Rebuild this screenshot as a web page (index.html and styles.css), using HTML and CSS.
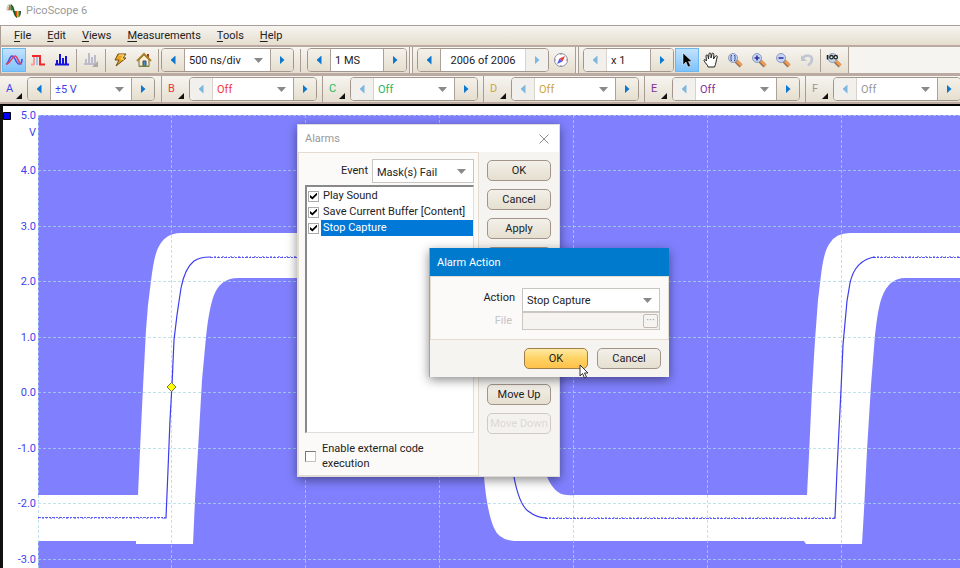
FILE: index.html
```html
<!DOCTYPE html>
<html lang="en">
<head>
<meta charset="utf-8">
<title>PicoScope 6</title>
<link rel="stylesheet" href="styles.css">
</head>
<body>
<div class="app">
  <header class="titlebar">
    <svg class="logo" viewBox="0 0 16 16" width="16" height="16" aria-hidden="true">
      <defs><linearGradient id="spectrum"><stop offset="0" stop-color="#0c6a2c"/><stop offset=".25" stop-color="#178a2c"/><stop offset=".4" stop-color="#e0321c"/><stop offset=".6" stop-color="#f0c41c"/><stop offset=".8" stop-color="#208a2c"/><stop offset="1" stop-color="#2b2f6a"/></linearGradient></defs>
      <path d="M1 7C1 3 2 1.500 4.500 1.500S8 4 8 8H6L5 7H1Z" fill="#e3f0dc" stroke="#8cb08c" stroke-width=".7"/>
      <path d="M2.500 7C2.500 3 3 2 4.500 2v5Z" fill="#ee4a2a"/>
      <path d="M4.500 2c2 0 3 2 3.500 6L6 7H4.500Z" fill="#2b8a3a"/>
      <path d="M7 8h8c0 4-1 6.500-3.500 6.500S8 12 7 8Z" fill="url(#spectrum)"/>
      <path d="M5 2C8 3 8 13 11 14.500" fill="none" stroke="#14421d"/>
    </svg>
    <span>PicoScope 6</span>
  </header>

  <nav class="menubar" aria-label="Main menu">
    <a href="#"><u>F</u>ile</a><a href="#"><u>E</u>dit</a><a href="#"><u>V</u>iews</a><a href="#"><u>M</u>easurements</a><a href="#"><u>T</u>ools</a><a href="#"><u>H</u>elp</a>
  </nav>

  <div class="toolbar" role="toolbar" aria-label="Capture">
    <div class="strip">
      <button class="tool active" aria-label="Scope mode"><svg viewBox="0 0 18 16" width="18" height="16"><path d="M1 12C4 12 4 4 7 4s4 8 7 8 3-4 3-5" fill="none" stroke="#4c50e8" stroke-width="1.600"/><path d="M1 12c4 1 6-8 9-8s3 8 7 8" fill="none" stroke="#e3465f" stroke-width="1.600"/></svg></button>
      <button class="tool" aria-label="Persistence mode"><svg viewBox="0 0 16 16" width="16" height="16"><path d="M1 12.500h3M4 4v9" fill="none" stroke="#ff9a9a" stroke-width="2"/><path d="M7 4v9" stroke="#9cc8ee" stroke-width="2"/><path d="M2 4h8v8.500h5" fill="none" stroke="#f0282d" stroke-width="2"/></svg></button>
      <button class="tool" aria-label="Spectrum mode"><svg viewBox="0 0 16 16" width="16" height="16"><path d="M1 12.500h14M3 13V8M6 13V2M9 13V6M12 13V4" fill="none" stroke="#1414dd" stroke-width="2"/></svg></button>
      <i class="sep"></i>
      <button class="tool" aria-label="Spectrum options" disabled><svg viewBox="0 0 16 16" width="16" height="16"><path d="M1 12h13M3 12V7M6 12V1M9 12V5M12 12V3" fill="none" stroke="#bcbcca" stroke-width="2"/><path d="M15 9v6H9Z" fill="#aaa"/></svg></button>
      <i class="sep"></i>
      <button class="tool" aria-label="Automatic setup"><svg viewBox="0 0 16 16" width="16" height="16"><path d="M6 2h8l-3 4h3L4 14l3-6H3Z" fill="#eaa51e" stroke="#6b4c18"/><path d="M7 3h5L9 7h3" fill="none" stroke="#ffe48a"/></svg></button>
      <button class="tool" aria-label="Home"><svg viewBox="0 0 16 16" width="16" height="16"><path d="M11 2h2v4h-2Z" fill="#9b3c22"/><path d="M3 8v6.500h10V8L8 3Z" fill="#f7edcf" stroke="#75664a"/><path d="M1 9l7-7 7 7" fill="none" stroke="#a8842c" stroke-width="2"/><path d="M7 9h3v5H7Z" fill="#4a8bd0" stroke="#3e4b58"/><path d="M3 14h10" stroke="#7c9c35"/></svg></button>
      <i class="sep"></i>
      <div class="spinner">
        <button class="step prev" aria-label="Shorter timebase"></button>
        <label class="combo timebase"><select aria-label="Timebase"><option>500 ns/div</option></select></label>
        <button class="step next" aria-label="Longer timebase"></button>
      </div>
      <i class="sep wide"></i>
      <div class="spinner">
        <button class="step prev" aria-label="Fewer samples"></button>
        <input class="samples" type="text" value="1 MS" aria-label="Samples">
        <button class="step next" aria-label="More samples"></button>
      </div>
    </div>
    <div class="strip">
      <div class="spinner">
        <button class="step prev" aria-label="Previous buffer"></button>
        <input class="buffer" type="text" value="2006 of 2006" aria-label="Buffer">
        <button class="step next" aria-label="Next buffer" disabled></button>
      </div>
      <button class="tool" aria-label="Buffer navigator"><svg viewBox="0 0 16 16" width="16" height="16"><circle cx="8" cy="8" r="6.500" fill="#fff" stroke="#8d8da0"/><path d="M8 2v1M8 13v1M2 8h1M13 8h1" stroke="#888"/><path d="M12 4L9.500 9.500l-3-3Z" fill="#f03a3a"/><path d="M4 12l2.500-5.500 3 3Z" fill="#4e5df0"/></svg></button>
    </div>
    <div class="strip">
      <div class="spinner">
        <button class="step prev" aria-label="Zoom factor down" disabled></button>
        <input class="factor" type="text" value="x 1" aria-label="Zoom factor">
        <button class="step next" aria-label="Zoom factor up"></button>
      </div>
      <button class="tool active pointer" aria-label="Select"><svg viewBox="0 0 16 16" width="16" height="16"><path d="M4 1v12l3-3 2 5 2.500-1L9.500 9.500H13Z" fill="#000" stroke="#fff" stroke-width=".5"/></svg></button>
      <button class="tool" aria-label="Hand"><svg viewBox="0 0 16 16" width="16" height="16"><path d="M5 15c0-2-3-4-4-6.500 0-1.500 1.500-1 2.500.5L3 4c0-1.500 1.500-1.500 2 0l.5 3L6 2c0-1.500 1.800-1.500 2 0v4l1-4c.3-1.500 2-1 1.800.5L10.500 7 12.500 4c.8-1 2 0 1.700 1C13 9 13 12 11.500 15Z" fill="#fff" stroke="#222"/></svg></button>
      <button class="tool" aria-label="Zoom window"><svg viewBox="0 0 16 16" width="16" height="16"><path d="M9 9l5 5" stroke="#8b735d" stroke-width="4"/><path d="M10 9l4.500 4.500" stroke="#f2994e" stroke-width="2.600"/><circle cx="6" cy="6" r="4.500" fill="#c5d5f6" stroke="#8f9bb6"/><path d="M5 3.500H4v5h1M7 3.500h1v5H7" fill="none" stroke="#4450a0"/></svg></button>
      <button class="tool" aria-label="Zoom in"><svg viewBox="0 0 16 16" width="16" height="16"><path d="M9 9l5 5" stroke="#8b735d" stroke-width="4"/><path d="M10 9l4.500 4.500" stroke="#f2994e" stroke-width="2.600"/><circle cx="6" cy="6" r="4.500" fill="#c5d5f6" stroke="#8f9bb6"/><path d="M3.500 6h5M6 3.500v5" stroke="#30309c" stroke-width="1.600"/></svg></button>
      <button class="tool" aria-label="Zoom out"><svg viewBox="0 0 16 16" width="16" height="16"><path d="M9 9l5 5" stroke="#8b735d" stroke-width="4"/><path d="M10 9l4.500 4.500" stroke="#f2994e" stroke-width="2.600"/><circle cx="6" cy="6" r="4.500" fill="#c5d5f6" stroke="#8f9bb6"/><path d="M3.500 6h5" stroke="#30309c" stroke-width="1.600"/></svg></button>
      <button class="tool" aria-label="Undo zoom" disabled><svg viewBox="0 0 16 16" width="16" height="16"><path d="M3 6.500C7 2 13 3 13 7.500c0 3-2 4.500-4 6" fill="none" stroke="#bfc5d2" stroke-width="2.500"/><path d="M2 3v6h6Z" fill="#bfc5d2"/></svg></button>
      <i class="sep tight"></i>
      <button class="tool" aria-label="Zoom to 100%"><svg viewBox="0 0 16 16" width="16" height="16"><path d="M9 9l5 5" stroke="#8b735d" stroke-width="4"/><path d="M10 9l4.500 4.500" stroke="#f2994e" stroke-width="2.600"/><circle cx="6.500" cy="6" r="4.500" fill="#c5d5e6" stroke="#8f9bb6"/><path d="M1.500 3v4.500" stroke="#222" stroke-width="1.500"/><circle cx="5.500" cy="5.200" r="1.700" fill="#dff" stroke="#222" stroke-width="1.300"/><circle cx="9.700" cy="5.200" r="1.700" fill="#dff" stroke="#222" stroke-width="1.300"/></svg></button>
    </div>
  </div>

  <div class="toolbar channels" role="toolbar" aria-label="Channels">
    <div class="channel a"><button class="name">A</button><div class="spinner"><button class="step prev" aria-label="Range down"></button><label class="combo"><select aria-label="Channel A range"><option>±5 V</option></select></label><button class="step next" aria-label="Range up"></button></div></div>
    <div class="channel b"><button class="name">B</button><div class="spinner"><button class="step prev" aria-label="Range down" disabled></button><label class="combo"><select aria-label="Channel B range"><option>Off</option></select></label><button class="step next" aria-label="Range up"></button></div></div>
    <div class="channel c"><button class="name">C</button><div class="spinner"><button class="step prev" aria-label="Range down" disabled></button><label class="combo"><select aria-label="Channel C range"><option>Off</option></select></label><button class="step next" aria-label="Range up"></button></div></div>
    <div class="channel d"><button class="name">D</button><div class="spinner"><button class="step prev" aria-label="Range down" disabled></button><label class="combo"><select aria-label="Channel D range"><option>Off</option></select></label><button class="step next" aria-label="Range up"></button></div></div>
    <div class="channel e"><button class="name">E</button><div class="spinner"><button class="step prev" aria-label="Range down" disabled></button><label class="combo"><select aria-label="Channel E range"><option>Off</option></select></label><button class="step next" aria-label="Range up"></button></div></div>
    <div class="channel f"><button class="name">F</button><div class="spinner"><button class="step prev" aria-label="Range down" disabled></button><label class="combo"><select aria-label="Channel F range"><option>Off</option></select></label><button class="step next" aria-label="Range up"></button></div></div>
  </div>

  <main class="scope">
    <svg class="plot" viewBox="3 106 957 462" preserveAspectRatio="xMinYMin slice" role="img" aria-label="Channel A waveform with mask">
      <path d="M38 115H960V568H38Z" fill="#8080ff"/>
      <path class="pass" d="M38 495H138L140 450 143 387 146 330 148 305 151 281Q154 256 158 248 165 233 181 233H440C470 233 474 300 486 350 Q515 455 547 477 552 488 558 492 563 496 575 495H807L809 455 812 390 815 340 818 300 821 275Q824 250 830 243 836 233 850 233H960V278H905Q889 278 882 297 878 307 875 335L871 385 867 450 864 510 862 544H806L804 541H514Q499 540 494 528 487 512 484 477C450 400 450 278 420 278H240Q221 277 214 295 209 308 206 337L202 380 198 450 195 500 193 544H136V541H38Z"/>
      <g class="grid">
        <path d="M38.500 115V568M171.500 115V568M305.500 115V568M439.500 115V568M573.500 115V568M707.500 115V568M841.500 115V568"/>
        <path d="M38 115.500H960M38 170.500H960M38 226.500H960M38 281.500H960M38 337.500H960M38 392.500H960M38 448.500H960M38 503.500H960M38 559.500H960"/>
      </g>
      <path class="trace" d="M164 518H166L168 470 170 420 172 385 174 340 177 315 181 288Q185 268 194 261 200 257 210 257M514 477Q519 504 528 511 537 518 547 518M834 518H835L837 470 841 390 843 345 847 301 850 283Q855 260 875 257"/>
      <g class="noise">
        <path d="M38 517.500H165M210 257.500H450M545 518.500H835M873 257.500H960"/>
        <path class="ripple" d="M38 518.500H165M210 256.500H450M545 517.500H835M873 256.500H960"/>
      </g>
      <path d="M171.500 382.500L176 387 171.500 391.500 167 387Z" fill="#ff0" stroke="#77763c"/>
      <path d="M3.500 112.500H10.500V119.500H3.500Z" fill="#00f" stroke="#000"/>
      <g class="axis">
        <text x="36" y="119">5.0</text><text x="36" y="136">V</text><text x="36" y="174">4.0</text><text x="36" y="230">3.0</text><text x="36" y="285">2.0</text><text x="36" y="341">1.0</text><text x="36" y="396">0.0</text><text x="36" y="452">-1.0</text><text x="36" y="507">-2.0</text><text x="36" y="563">-3.0</text>
      </g>
    </svg>
  </main>

  <section class="dialog alarms" role="dialog" aria-labelledby="alarms-title">
    <header class="dialog-title"><span id="alarms-title">Alarms</span><button class="close" aria-label="Close"><svg viewBox="0 0 10 10" width="10" height="10"><path d="M.5.5l9 9M9.500.5l-9 9" stroke="#8c8c8c"/></svg></button></header>
    <div class="alarms-body">
      <div class="alarms-main">
        <div class="field"><label for="event">Event</label><span class="combo boxed"><select id="event"><option>Mask(s) Fail</option></select></span></div>
        <ul class="actions">
          <li><label><input type="checkbox" checked><span>Play Sound</span></label></li>
          <li><label><input type="checkbox" checked><span>Save Current Buffer [Content]</span></label></li>
          <li class="selected"><label><input type="checkbox" checked><span>Stop Capture</span></label></li>
        </ul>
        <label class="external"><input type="checkbox"><span>Enable external code execution</span></label>
      </div>
      <div class="alarms-side">
        <button class="push">OK</button>
        <button class="push">Cancel</button>
        <button class="push">Apply</button>
        <button class="push">Add</button>
        <button class="push move">Move Up</button>
        <button class="push" disabled>Move Down</button>
      </div>
    </div>
  </section>

  <section class="dialog action" role="dialog" aria-labelledby="action-title">
    <header class="dialog-title"><span id="action-title">Alarm Action</span></header>
    <div class="action-main">
      <label for="act">Action</label><span class="combo boxed"><select id="act"><option>Stop Capture</option></select></span>
      <label class="off" for="file">File</label><span class="file"><input id="file" type="text" disabled><button class="browse" aria-label="Browse" disabled>···</button></span>
    </div>
    <footer class="action-footer"><button class="push primary">OK</button><button class="push">Cancel</button></footer>
    <svg class="cursor" viewBox="0 0 10 15" width="10" height="15" aria-hidden="true"><path d="M1 1v11l2.500-2.500L5.500 14l2-1-2-4H9Z" fill="#fff" stroke="#333"/></svg>
  </section>
</div>
</body>
</html>
```

FILE: styles.css
```css
* { box-sizing: border-box; }

body {
  margin: 0;
  background: #fff;
  color: #222;
  font: 11px/16px Roboto, "Noto Sans", sans-serif;
  overflow: hidden;
}

button, input, select {
  margin: 0;
  padding: 0;
  border: 0;
  border-radius: 0;
  background: none;
  color: inherit;
  font: inherit;
}

.app {
  position: relative;
  display: flex;
  flex-direction: column;
  height: 100vh;
}

.titlebar {
  display: flex;
  align-items: center;
  gap: 4px;
  height: 25px;
  padding: 0 0 4px 6px;
  color: #999;
}

/* Menu and toolbars */
.menubar {
  display: flex;
  gap: 16px;
  height: 20px;
  padding: 2px 13px;
  border-top: 1px solid #a99d95;
  border-left: 1px solid #a99d95;
  background: linear-gradient(#f7f5f1, #e5dece);
}

.menubar a { color: #222; text-decoration: none; }
.menubar u { text-underline-offset: 2px; }

.toolbar {
  display: flex;
  gap: 2px;
  flex: none;
  height: 30px;
  border-top: 2px solid #bbaaa1;
  border-bottom: 2px solid #bbaaa1;
  background: #f6f4f1;
  overflow: hidden;
}

.strip {
  display: flex;
  flex: none;
  align-items: center;
  padding: 0 2px 0 4px;
  border: solid #ab9d94;
  border-width: 0 1px;
  background: linear-gradient(#f7f5f1, #e6dfd0);
}

.strip:first-child { padding-left: 1px; }

.tool {
  display: grid;
  place-items: center;
  width: 24px;
  height: 24px;
}

.tool.active {
  border: 1px solid #6cb9f2;
  background: linear-gradient(#c3e2fd, #7fc2fb);
}

.pointer { margin-left: 1px; }

.sep {
  width: 1px;
  height: 23px;
  margin: 0 2px;
  background: #a99c93;
}

.sep.wide { margin: 0 6px; }
.sep.tight { margin: 0 1px; }

.spinner {
  display: flex;
  flex: none;
  height: 24px;
  border: 1px solid #a3968d;
  border-radius: 4px;
  overflow: hidden;
  background: #fff;
}

.step {
  display: grid;
  place-items: center;
  width: 23px;
  background: linear-gradient(#f4f1ea, #e6dfcf);
}

.prev { border-right: 1px solid #aea198; }
.next { border-left: 1px solid #aea198; }

.step::before {
  content: "";
  width: 5px;
  height: 9px;
  background: #0a78d0;
}

.prev::before { clip-path: polygon(100% 0, 100% 100%, 0 50%); }
.next::before { clip-path: polygon(0 0, 100% 50%, 0 100%); }
.step:disabled { background: #f2f0ec; border-color: #d8d2cb; }
.step:disabled::before { background: #7bb7e0; }

.combo {
  position: relative;
  display: flex;
}

.combo select {
  appearance: none;
  width: 100%;
  padding: 1px 20px 0 4px;
  background: #fff;
}

.combo::after {
  content: "";
  position: absolute;
  top: 50%;
  right: 7px;
  width: 9px;
  height: 5px;
  margin-top: -2px;
  background: #898989;
  clip-path: polygon(0 0, 100% 0, 50% 100%);
  pointer-events: none;
}

.spinner input { padding-top: 1px; background: #fff; }
.timebase { width: 85px; }
.spinner .samples { width: 52px; padding-left: 4px; }
.spinner .buffer { width: 84px; text-align: center; }
.spinner .factor { width: 43px; padding-left: 4px; }

.channels {
  gap: 0;
  height: 29px;
  border-top-width: 1px;
  background: linear-gradient(#f7f5f1, #e6dfd0);
}

.channel {
  display: flex;
  flex: none;
  align-items: center;
  width: 161px;
  padding-left: 3px;
}

.channel + .channel { border-left: 1px solid #a99c93; }
.channel .combo { width: 80px; }

.name {
  position: relative;
  width: 24px;
  height: 24px;
  padding-left: 3px;
  text-align: left;
}

.name::after {
  content: "";
  position: absolute;
  right: 5px;
  bottom: 2px;
  width: 6px;
  height: 6px;
  background: #111;
  clip-path: polygon(100% 0, 100% 100%, 0 100%);
}

.a { color: #3f3fe8; }
.b { color: #f0373c; }
.c { color: #2db560; }
.d { color: #cda43a; }
.e { color: #82309a; }
.f { color: #999; }

/* Waveform view */
.scope {
  flex: 1;
  min-height: 0;
  border-top: 2px solid #000;
  border-left: 3px solid #111;
}

.plot { display: block; width: 100%; height: 100%; }
.pass { fill: #fff; }
.grid path { fill: none; stroke: #a9d8e6; stroke-opacity: .75; stroke-dasharray: 3 2; }
.trace { fill: none; stroke: #3c3cf0; stroke-width: 1.200; }
.noise path { fill: none; stroke: #3434f0; stroke-opacity: .8; stroke-dasharray: 3 1 2 1; }
.noise .ripple { stroke-opacity: .5; stroke-dasharray: 1 3 2 2; }
.axis { fill: #3f3fef; font-size: 11px; text-anchor: end; }

/* Dialogs */
.dialog {
  position: absolute;
  display: flex;
  flex-direction: column;
  background: #f5f4f1;
  box-shadow: 0 3px 10px rgba(0, 0, 0, .45);
}

.dialog-title {
  display: flex;
  align-items: center;
  justify-content: space-between;
  height: 28px;
  padding: 1px 10px 0 7px;
}

.close { display: flex; }

.push {
  height: 21px;
  width: 64px;
  border: 1px solid #a3948a;
  border-radius: 5px;
  background: linear-gradient(#f3f0ea, #e5dfcf);
  white-space: nowrap;
}

.push:disabled { border-color: #cfcac4; background: #f4f2ef; color: #dcd9d5; }
.push.primary { border-color: #a07f49; background: linear-gradient(#ffeaa5, #ffd264 50%, #ffc24c); }

.boxed { border: 1px solid #c9c6c2; height: 24px; }

.alarms { left: 297px; top: 124px; width: 263px; border: 1px solid #dedbd8; }
.alarms .dialog-title { height: 27px; background: #fff; color: #999; }
.alarms-body { display: flex; }

.alarms-main {
  flex: 1;
  min-width: 0;
  padding: 6px 4px 4px 6px;
  border: 1px solid #e3dccf;
  background: #fbfaf8;
}

.field { display: flex; justify-content: flex-end; gap: 4px; line-height: 24px; }
.field .combo { width: 102px; }

.actions {
  height: 248px;
  margin: 2px 0 0;
  padding: 1px 0 0 1px;
  border: 1px solid #dedede;
  border-top: 2px solid #898989;
  border-left: 2px solid #898989;
  background: #fff;
  list-style: none;
}

.actions label { display: flex; align-items: center; gap: 2px; }
.actions span { flex: 1; padding-left: 2px; white-space: nowrap; }
.selected span { background: #0078d7; color: #fff; }

input[type="checkbox"] {
  appearance: none;
  display: grid;
  flex: none;
  width: 11px;
  height: 11px;
  border: 1px solid #c2c2c2;
  border-top-color: #777;
  border-left-color: #777;
  background: #fff;
}

.actions input[type="checkbox"] { border-color: #aaa; }

input[type="checkbox"]:checked::before {
  content: "";
  margin: 1px;
  background: #000;
  clip-path: polygon(0 35%, 35% 65%, 100% 0, 100% 35%, 35% 100%, 0 70%);
}

.external {
  display: flex;
  align-items: center;
  gap: 6px;
  padding: 8px 30px 0 0;
  line-height: 15px;
}

.alarms-side {
  display: flex;
  flex-direction: column;
  gap: 8px;
  padding: 8px;
}

.move { margin-top: 108px; }

.action { left: 429px; top: 248px; width: 240px; border-left: 1px solid #68b4dd; }
.action .dialog-title { background: #007acc; color: #fff; }

.action-main {
  display: grid;
  grid-template-columns: 1fr 138px;
  gap: 0 7px;
  padding: 11px 8px 9px;
  border: 1px solid #e3dccf;
  background: #fbfaf8;
  text-align: right;
  line-height: 20px;
}

.action-main .off { color: #c4c4c4; padding-right: 3px; }

.file {
  display: flex;
  height: 18px;
  padding: 1px;
  border: 1px solid #cbc8c3;
  background: #f5f4f1;
}

.action-main .off { line-height: 18px; }
.file input { flex: 1; min-width: 0; }

.browse {
  width: 15px;
  height: 14px;
  border: 1px solid #c2bbb3;
  border-radius: 2px;
  color: #999;
  line-height: 10px;
}

.action-footer {
  display: flex;
  justify-content: flex-end;
  gap: 9px;
  padding: 8px;
}

.cursor { position: absolute; left: 149px; top: 116px; }
```
